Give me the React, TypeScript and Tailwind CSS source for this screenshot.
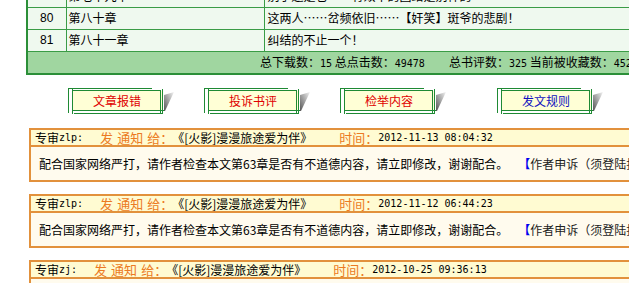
import React from 'react'

const mono = "font-['DejaVu_Sans_Mono',monospace] text-[10px]"

const rows = [
  { no: '79', title: '第七十九章', desc: '别了还是它……有效率的团结是别样的' },
  { no: '80', title: '第八十章', desc: '这两人……岔频依旧……【奸笑】斑爷的悲剧！' },
  { no: '81', title: '第八十一章', desc: '纠结的不止一个！' },
]

const buttons = [
  { label: '文章报错', color: 'text-[#e00000]', ml: 'ml-[68px]' },
  { label: '投诉书评', color: 'text-[#e00000]', ml: 'ml-[30px]' },
  { label: '检举内容', color: 'text-[#e00000]', ml: 'ml-[30px]' },
  { label: '发文规则', color: 'text-[#1010c0]', ml: 'ml-[51px]' },
]

const notices = [
  { who: 'zlp', time: '2012-11-13 08:04:32' },
  { who: 'zlp', time: '2012-11-12 06:44:23' },
  { who: 'zj', time: '2012-10-25 09:36:13' },
]

const FrameButton = ({ label, color, ml }: { label: string; color: string; ml: string }) => (
  <div className={`relative h-[27px] w-[106px] shrink-0 ${ml}`}>
    <svg width="106" height="27" className="absolute left-0 top-0">
      <defs>
        <linearGradient id="shd" x1="0" y1="1" x2="1" y2="0">
          <stop offset="0" stopColor="#555" />
          <stop offset="1" stopColor="#f4f4f4" />
        </linearGradient>
      </defs>
      <rect x="4" y="3" width="90" height="19" fill="#ffffd6" />
      <polygon points="96,7 106,4 97,23 96,23" fill="url(#shd)" />
      <g stroke="#1f8a34" strokeWidth="1">
        <line x1="0" y1="0.5" x2="84" y2="0.5" />
        <line x1="4" y1="2.5" x2="92" y2="2.5" />
        <line x1="0.5" y1="0" x2="0.5" y2="25" />
        <line x1="4.5" y1="1" x2="4.5" y2="26" />
        <line x1="94.5" y1="1" x2="94.5" y2="26" />
        <line x1="92.5" y1="2" x2="92.5" y2="25" />
        <line x1="4" y1="22.5" x2="96" y2="22.5" />
        <line x1="6" y1="25.5" x2="94" y2="25.5" />
      </g>
    </svg>
    <span className={`relative flex h-[25px] w-[98px] items-center justify-center text-[12px] ${color}`}>{label}</span>
  </div>
)

const Notice = ({ who, time }: { who: string; time: string }) => (
  <div className="ml-[29px] w-[660px] border-2 border-r-0 border-[#e2913c]">
    <div className="flex h-[17px] items-center border-b-2 border-[#e2913c] bg-[#fffbd2] pl-[4px] text-[12px] leading-none">
      <span>专审</span>
      <span className={mono}>{who}:</span>
      <span className="ml-[17px] flex text-[13px] text-[#ec7a22]">
        <span>发</span>
        <span className="ml-[4px]">通知</span>
        <span className="ml-[4px]">给：</span>
      </span>
      <span className="-ml-[1px]">《[火影]漫漫旅途爱为伴》</span>
      <span className="ml-[27px] text-[13px] text-[#ec7a22]">时间：</span>
      <span className={mono}>{time}</span>
    </div>
    <div className="flex h-[33px] items-center whitespace-nowrap bg-[#fffbee] pl-[8px] text-[12px] leading-none">
      <span>配合国家网络严打，请作者检查本文第63章是否有不道德内容，请立即修改，谢谢配合。</span>
      <span className="ml-[10px] font-bold text-[#0000ee]">【</span>
      <span className="text-[#222]">作者申诉（须登陆抗议）</span>
    </div>
  </div>
)

export default function App() {
  return (
    <div className="h-[283px] w-[629px] overflow-hidden bg-white font-['Noto_Sans_CJK_SC',sans-serif] text-black">
      <table className="-mt-[16px] ml-[26px] w-[660px] border-collapse border-2 border-[#2b8f38] text-[12px]">
        <tbody>
          {rows.map((r) => (
            <tr key={r.no} className="h-[22px] bg-[#eff9ef]">
              <td className="w-[39px] border border-[#3a9c46] text-center font-['Liberation_Sans',sans-serif]">{r.no}</td>
              <td className="w-[198px] border border-[#3a9c46] pl-[2px]">{r.title}</td>
              <td className="whitespace-nowrap border border-[#3a9c46] pl-[3px]">{r.desc}</td>
            </tr>
          ))}
          <tr className="h-[23px] bg-[#a0d6a0]">
            <td colSpan={3} className="whitespace-nowrap border border-[#3a9c46] pl-[232px]">
              总下载数：<span className={mono}>15</span> 总点击数：<span className={mono}>49478</span>
              <span className="ml-[24px]">总书评数：</span><span className={mono}>325</span> 当前被收藏数：
              <span className={mono}>4521</span>
            </td>
          </tr>
        </tbody>
      </table>

      <div className="mt-[13px] flex">
        {buttons.map((b) => (
          <FrameButton key={b.label} {...b} />
        ))}
      </div>

      <div className="mt-[13px] flex flex-col gap-[12px]">
        {notices.map((n, i) => (
          <Notice key={i} {...n} />
        ))}
      </div>
    </div>
  )
}
